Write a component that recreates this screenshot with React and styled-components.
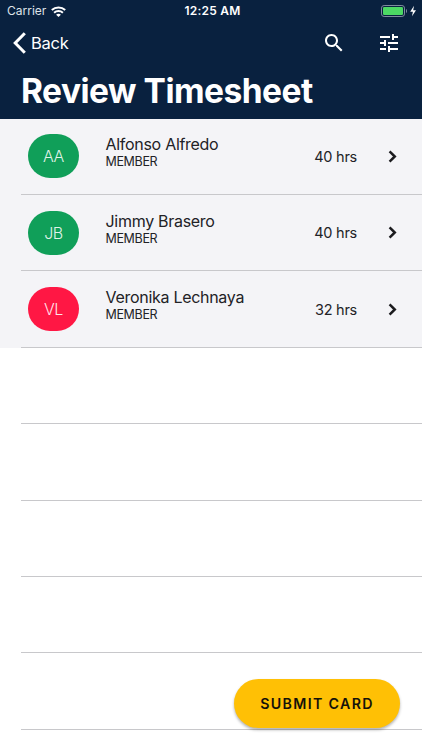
import styled, { createGlobalStyle } from "styled-components";

const GlobalStyle = createGlobalStyle`
  * {
    box-sizing: border-box;
  }

  body {
    margin: 0;
    background: #fff;
    font-family: Inter, "Liberation Sans", sans-serif;
    color: #222226;
  }
`;

const Screen = styled.div`
  position: relative;
  width: 422px;
  height: 750px;
  overflow: hidden;
  background: #fff;
`;

const Header = styled.header`
  height: 118.8px;
  background: #09213f;
  color: #fff;
`;

const StatusBar = styled.div`
  display: grid;
  grid-template-columns: 1fr auto 1fr;
  align-items: center;
  height: 22px;
  padding: 0 5px 0 7px;
  font-size: 12px;
  line-height: 22px;
`;

const Carrier = styled.div`
  display: flex;
  align-items: center;
  gap: 5px;
  color: #dfe3e8;
`;

const Clock = styled.div`
  margin-left: 1px;
  font-weight: 600;
  letter-spacing: 0.25px;
`;

const Power = styled.div`
  display: flex;
  justify-content: flex-end;
`;

const NavBar = styled.div`
  display: flex;
  align-items: center;
  height: 42px;
  padding: 0 21px 0 13px;
`;

const BackButton = styled.button`
  display: flex;
  align-items: center;
  gap: 5px;
  margin-right: auto;
  padding: 0;
  border: none;
  background: none;
  color: inherit;
  font: inherit;
  font-size: 16.5px;
  letter-spacing: -0.25px;
`;

const IconButton = styled.button`
  display: flex;
  margin-left: 31px;
  padding: 0;
  border: none;
  background: none;
  color: inherit;
`;

const Title = styled.h1`
  margin: 0;
  padding: 6px 21px 0;
  font-size: 33.5px;
  font-weight: 700;
  line-height: 42px;
  letter-spacing: -0.5px;
  white-space: nowrap;
`;

const List = styled.ul`
  margin: 0;
  padding: 0;
  list-style: none;
`;

const Row = styled.li`
  height: 76.35px;
  padding-left: 21px;
  background: ${({ $empty }) => ($empty ? "#fff" : "#f4f4f7")};
`;

const RowInner = styled.div`
  display: flex;
  align-items: center;
  height: 100%;
  padding: 0 25px 0 7px;
  border-bottom: 1px solid #c8c8cb;
`;

const Avatar = styled.div`
  display: flex;
  align-items: center;
  justify-content: center;
  width: 51px;
  height: 44px;
  border-radius: 22px;
  background: ${({ $color }) => $color};
  color: rgba(255, 255, 255, 0.88);
  font-size: 16px;
  font-weight: 300;
  letter-spacing: -0.4px;
`;

const Person = styled.div`
  flex: 1;
  margin: -8px 0 0 26.5px;
`;

const Name = styled.div`
  font-size: 16px;
  line-height: 19px;
  letter-spacing: -0.29px;
`;

const Role = styled.div`
  font-size: 12.5px;
  line-height: 15px;
  letter-spacing: -0.35px;
`;

const Hours = styled.div`
  margin-right: 31px;
  font-size: 14.5px;
  letter-spacing: -0.25px;
`;

const SubmitButton = styled.button`
  position: absolute;
  right: 22px;
  bottom: 22px;
  width: 166px;
  height: 49px;
  padding: 0;
  border: none;
  border-radius: 25px;
  background: #ffc005;
  box-shadow: 0 2px 3px rgba(0, 0, 0, 0.3);
  color: #15120a;
  font: inherit;
  font-size: 14.2px;
  font-weight: 600;
  letter-spacing: 1.35px;
`;

const members = [
  { initials: "AA", name: "Alfonso Alfredo", hours: 40, color: "#109f59" },
  { initials: "JB", name: "Jimmy Brasero", hours: 40, color: "#109f59" },
  { initials: "VL", name: "Veronika Lechnaya", hours: 32, color: "#ff1744" },
];

const emptyRows = [0, 1, 2, 3, 4];

const WifiIcon = () => (
  <svg width="15" height="11" viewBox="0 0 15 11" fill="none" stroke="#fff" strokeWidth="2">
    <path d="M0.8 4.1C4.5 0.6 10.5 0.6 14.2 4.1" />
    <path d="M3.1 6.8C5.6 4.5 9.4 4.5 11.9 6.8" />
    <path d="M7.5 11L5.1 8.7C6.4 7.5 8.6 7.5 9.9 8.7Z" fill="#fff" stroke="none" />
  </svg>
);

const BatteryIcon = () => (
  <svg width="36" height="12" viewBox="0 0 36 12">
    <rect x="0.5" y="0.5" width="23" height="11" rx="2.6" fill="none" stroke="#7f8c9e" />
    <rect x="2" y="2" width="20" height="8" rx="1.2" fill="#4cd964" />
    <path d="M25 4C26.3 4.4 26.3 7.6 25 8Z" fill="#7f8c9e" />
    <path d="M33 0.8L29.2 6.7H31.9L31 11.2L35 5.2H32.2Z" fill="#fff" />
  </svg>
);

const BackIcon = () => (
  <svg width="13" height="22" viewBox="0 0 13 22" fill="none" stroke="#fff" strokeWidth="3">
    <path d="M11.8 1.2L2.2 11L11.8 20.8" />
  </svg>
);

const SearchIcon = () => (
  <svg width="24" height="24" viewBox="0 0 24 24" fill="currentColor">
    <path d="M15.5 14h-.79l-.28-.27C15.41 12.59 16 11.11 16 9.5 16 5.91 13.09 3 9.5 3S3 5.91 3 9.5 5.91 16 9.5 16c1.61 0 3.09-.59 4.23-1.57l.27.28v.79l5 4.99L20.49 19l-4.99-5zm-6 0C7.01 14 5 11.99 5 9.5S7.01 5 9.5 5 14 7.01 14 9.5 11.99 14 9.5 14z" />
  </svg>
);

const TuneIcon = () => (
  <svg width="24" height="24" viewBox="0 0 24 24" fill="currentColor">
    <path d="M3 17v2h6v-2H3zM3 5v2h10V5H3zm10 16v-2h8v-2h-8v-2h-2v6h2zM7 9v2H3v2h4v2h2V9H7zm14 4v-2H11v2h10zm-6-4h2V7h4V5h-4V3h-2v6z" />
  </svg>
);

const ForwardIcon = () => (
  <svg width="9" height="13" viewBox="0 0 9 13" fill="none" stroke="#1b1b1e" strokeWidth="2.5">
    <path d="M1.6 1.3L6.8 6.5L1.6 11.7" />
  </svg>
);

const MemberRow = ({ member }) => {
  return (
    <Row>
      <RowInner>
        <Avatar $color={member.color}>{member.initials}</Avatar>
        <Person>
          <Name>{member.name}</Name>
          <Role>MEMBER</Role>
        </Person>
        <Hours>{member.hours} hrs</Hours>
        <ForwardIcon />
      </RowInner>
    </Row>
  );
};

const App = () => {
  return (
    <Screen>
      <GlobalStyle />
      <Header>
        <StatusBar>
          <Carrier>
            Carrier <WifiIcon />
          </Carrier>
          <Clock>12:25 AM</Clock>
          <Power>
            <BatteryIcon />
          </Power>
        </StatusBar>
        <NavBar>
          <BackButton>
            <BackIcon /> Back
          </BackButton>
          <IconButton aria-label="Search">
            <SearchIcon />
          </IconButton>
          <IconButton aria-label="Filter">
            <TuneIcon />
          </IconButton>
        </NavBar>
        <Title>Review Timesheet</Title>
      </Header>
      <List>
        {members.map((member) => (
          <MemberRow key={member.initials} member={member} />
        ))}
        {emptyRows.map((row) => (
          <Row key={row} $empty>
            <RowInner />
          </Row>
        ))}
      </List>
      <SubmitButton>SUBMIT CARD</SubmitButton>
    </Screen>
  );
};

export default App;
